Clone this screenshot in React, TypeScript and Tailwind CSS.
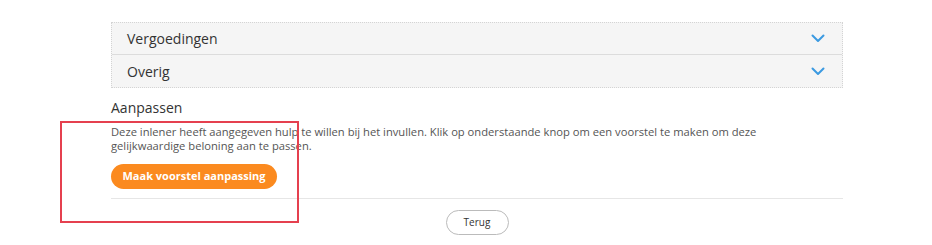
import React from "react";

function Chevron() {
  return (
    <svg width="14" height="9" viewBox="0 0 14 9" fill="none">
      <path d="M1.5 1.5 L7 7 L12.5 1.5" stroke="#3b9ae1" strokeWidth="2" strokeLinecap="round" strokeLinejoin="round" />
    </svg>
  );
}

function Row({ label, last }: { label: string; last?: boolean }) {
  return (
    <div className={`flex h-[32px] items-center justify-between pl-[15px] pr-[17px] ${last ? "" : "border-b border-[#dcdcdc]"}`}>
      <span className="text-[14px] text-[#333]">{label}</span>
      <Chevron />
    </div>
  );
}

export default function App() {
  return (
    <div className="relative h-[245px] w-[932px] bg-white" style={{ fontFamily: '"Open Sans", sans-serif' }}>
      <div className="ml-[111px] w-[732px] pt-[22px]">
        <div className="border border-dotted border-[#d4d4d4] bg-[#f5f5f5]">
          <Row label="Vergoedingen" />
          <Row label="Overig" last />
        </div>
        <div className="mt-[11px] text-[14px] leading-[18px] text-[#333]">Aanpassen</div>
        <p className="mt-[8px] text-[11.2px] leading-[14px] text-[#555]">
          Deze inlener heeft aangegeven hulp te willen bij het invullen. Klik op onderstaande knop om een voorstel te maken om deze
          <br />
          gelijkwaardige beloning aan te passen.
        </p>
        <button className="mt-[11px] flex h-[25px] w-[166px] items-center justify-center rounded-full bg-[#fb8a1f] text-[11px] font-bold text-white">
          Maak voorstel aanpassing
        </button>
        <div className="mt-[9px] h-px w-full bg-[#e6e6e6]" />
        <div className="mt-[11px] flex justify-center">
          <button className="flex h-[25px] w-[63px] items-center justify-center rounded-full border border-[#bbb] text-[10px] text-[#333]">
            Terug
          </button>
        </div>
      </div>
      <div className="absolute left-[60px] top-[121px] h-[102px] w-[239px] border-2 border-[#e5404f]" />
    </div>
  );
}
